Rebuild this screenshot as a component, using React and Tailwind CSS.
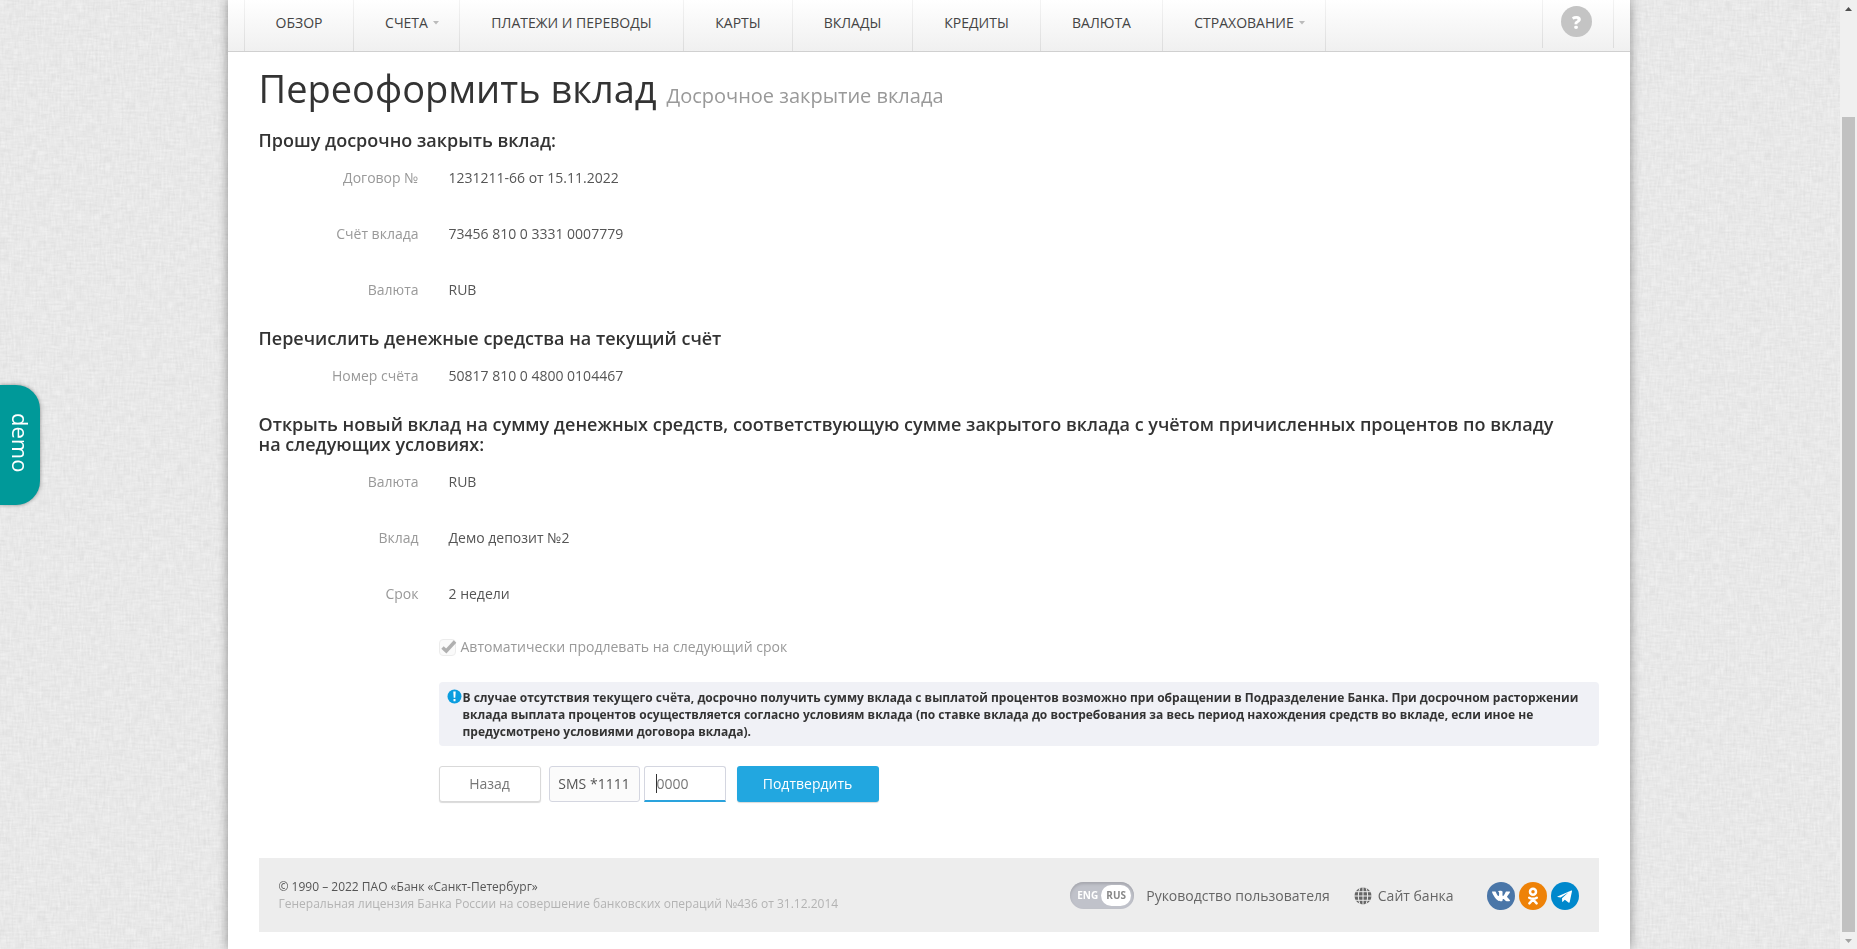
import React from "react";

const nav = [
  { label: "ОБЗОР", w: "w-[109px]" },
  { label: "СЧЕТА", w: "w-[106px]", menu: true },
  { label: "ПЛАТЕЖИ И ПЕРЕВОДЫ", w: "w-[224px]" },
  { label: "КАРТЫ", w: "w-[109px]" },
  { label: "ВКЛАДЫ", w: "w-[120px]" },
  { label: "КРЕДИТЫ", w: "w-[128px]" },
  { label: "ВАЛЮТА", w: "w-[122px]" },
  { label: "СТРАХОВАНИЕ", w: "w-[163px]", menu: true },
];

function Texture() {
  return (
    <svg className="fixed inset-0 -z-10 h-full w-full" aria-hidden="true">
      <defs>
        <filter id="weave" x="0" y="0" width="100%" height="100%" colorInterpolationFilters="sRGB">
          <feTurbulence type="fractalNoise" baseFrequency="0.08 0.5" numOctaves="2" seed="3" result="h" />
          <feTurbulence type="fractalNoise" baseFrequency="0.5 0.08" numOctaves="2" seed="8" result="v" />
          <feComposite in="h" in2="v" operator="arithmetic" k1="0" k2="0.5" k3="0.5" k4="0" />
          <feColorMatrix values="0.12 0 0 0 0.85  0.12 0 0 0 0.85  0.12 0 0 0 0.85  0 0 0 0 1" />
        </filter>
      </defs>
      <rect width="100%" height="100%" filter="url(#weave)" />
    </svg>
  );
}

function Divider() {
  return <span className="w-px shrink-0 bg-linear-to-b from-[#f4f4f4] to-[#dcdcdc]" />;
}

function TopNav() {
  return (
    <nav className="flex h-[52px] border-b border-[#d0d0d0] bg-linear-to-b from-white to-[#f0f0f0] pl-4 text-sm text-[#444]">
      <Divider />
      {nav.map((n) => (
        <div key={n.label} className={"flex " + n.w}>
          <a href="#" className="flex flex-1 items-center justify-center pb-[6px] pl-px whitespace-nowrap">
            {n.label}
            {n.menu && (
              <svg width="6" height="4" viewBox="0 0 6 4" fill="#bbb" className="-mr-[11px] ml-[5px]">
                <path d="M0 0h6L3 3.5z" />
              </svg>
            )}
          </a>
          <Divider />
        </div>
      ))}
      <div className="mr-4 ml-auto flex h-12">
        <Divider />
        <div className="flex w-[70px] justify-center pt-[6px] pr-[2px]">
          <button aria-label="Помощь" className="h-[31px] w-[31px] rounded-full bg-[#c4c4c4] text-lg leading-none font-extrabold text-white">
            ?
          </button>
        </div>
        <Divider />
      </div>
    </nav>
  );
}

function Heading({ children }) {
  return <h2 className="pr-6 text-lg leading-5 font-semibold text-[#333]">{children}</h2>;
}

function Row({ label, value }) {
  return (
    <div className="flex h-5 gap-[30px] text-sm leading-5">
      <dt className="w-40 text-right text-[#999]">{label}</dt>
      <dd className="text-[#555]">{value}</dd>
    </div>
  );
}

function Footer() {
  return (
    <footer className="mt-14 flex h-[74px] items-center justify-between bg-[#ededed] px-5">
      <div className="text-xs leading-[17px]">
        <p className="text-[#555]">© 1990 – 2022 ПАО «Банк «Санкт-Петербург»</p>
        <p className="text-[#b3b3b3]">Генеральная лицензия Банка России на совершение банковских операций №436 от 31.12.2014</p>
      </div>
      <div className="flex items-center pt-px text-sm text-[#666]">
        <div className="mr-3 flex h-[27px] w-16 items-center justify-between rounded-full bg-[#c0c2ca] pr-[3px] pl-[7px] text-[10px] font-bold shadow-[inset_0_2px_3px_#a5a6ad]">
          <button className="text-white">ENG</button>
          <button className="h-[21px] w-[30px] rounded-full bg-white text-[#888]">RUS</button>
        </div>
        <a href="#" className="mr-6">Руководство пользователя</a>
        <a href="#" className="mr-[33px] flex items-center gap-[6px]">
          <svg width="18" height="18" viewBox="0 0 18 18">
            <circle cx="9" cy="9" r="8.5" fill="#666" />
            <path d="M9 0v18M0 9h18M1.5 4.7h15M1.5 13.3h15M6 .7Q2.600 9 6 17.300M12 .7Q15.400 9 12 17.300" stroke="#ededed" strokeWidth="1" fill="none" />
          </svg>
          Сайт банка
        </a>
        <div className="flex gap-1">
          <a href="#" aria-label="ВКонтакте">
            <svg width="28" height="28" viewBox="0 0 28 28">
              <circle cx="14" cy="14" r="14" fill="#4a76a8" />
              <path transform="translate(5 5) scale(.75)" fill="#fff" d="M13.162 18.994c.609 0 .858-.406.851-.915-.031-1.917.714-2.949 2.059-1.604 1.488 1.488 1.796 2.519 3.603 2.519h3.200c.808 0 1.126-.26 1.126-.668 0-.863-1.421-2.386-2.625-3.504-1.686-1.565-1.765-1.602-.313-3.486 1.801-2.339 4.157-5.336 2.073-5.336h-3.981c-.772 0-.828.435-1.103 1.083-.995 2.347-2.886 5.387-3.604 4.922-.751-.485-.407-2.406-.35-5.261.015-.754.011-1.271-1.141-1.539-.629-.145-1.241-.205-1.809-.205-2.273 0-3.841.953-2.950 1.119 1.571.293 1.420 3.692 1.054 5.160-.638 2.556-3.036-2.024-4.035-4.305-.241-.548-.315-.974-1.175-.974h-3.255c-.492 0-.787.160-.787.516 0 .602 2.960 6.720 5.786 9.770 2.756 2.975 5.480 2.708 7.376 2.708z" />
            </svg>
          </a>
          <a href="#" aria-label="Одноклассники">
            <svg width="28" height="28" viewBox="0 0 28 28">
              <circle cx="14" cy="14" r="14" fill="#ee8208" />
              <g fill="none" stroke="#fff" strokeWidth="2.500" strokeLinecap="round">
                <circle cx="14" cy="9.800" r="3" />
                <path d="M10.200 15.700q3.800 2.300 7.600 0M14 17.500l-3.600 3.800M14 17.500l3.600 3.800" />
              </g>
            </svg>
          </a>
          <a href="#" aria-label="Telegram">
            <svg width="28" height="28" viewBox="0 0 28 28">
              <circle cx="14" cy="14" r="14" fill="#0088cc" />
              <path fill="#fff" d="M6.500 14.500 20.300 8.600q.9-.3.700.7l-2.300 10.800q-.3 1-1.200.4l-3.700-2.700-2 2q-.5.400-.6-.3l-.2-3.200 6.300-5.700-7.700 4.900-3-.6q-.6-.1-.1-.4z" />
            </svg>
          </a>
        </div>
      </div>
    </footer>
  );
}

function Scrollbar() {
  return (
    <div aria-hidden="true" className="fixed inset-y-0 right-0 flex w-[17px] flex-col items-center bg-[#f0f0f0]">
      <div className="flex h-[117px] pt-[7px]">
        <svg width="7" height="4" viewBox="0 0 7 4" fill="#505050"><path d="M0 4h7L3.500 0z" /></svg>
      </div>
      <div className="w-[13px] flex-1 bg-[#c1c1c1]" />
      <div className="flex h-[17px] items-center">
        <svg width="7" height="4" viewBox="0 0 7 4" fill="#a3a3a3"><path d="M0 0h7L3.500 4z" /></svg>
      </div>
    </div>
  );
}

export default function App() {
  return (
    <div className="isolate min-h-screen bg-[#e6e6e6] font-['Open_Sans',sans-serif]">
      <Texture />
      <div className="mx-auto flex min-h-screen max-w-[1402px] flex-col bg-white shadow-[0_0_10px_rgba(0,0,0,0.4)]">
        <TopNav />
        <main className="px-[31px] pb-4">
          <h1 className="pt-[14px] text-[38px] leading-[44px] font-normal text-[#333]">
            Переоформить вклад <small className="text-xl text-[#999]">Досрочное закрытие вклада</small>
          </h1>
          <div className="mt-5"><Heading>Прошу досрочно закрыть вклад:</Heading></div>
          <dl className="mt-[18px] flex flex-col gap-9">
            <Row label="Договор №" value="1231211-66 от 15.11.2022" />
            <Row label="Счёт вклада" value="73456 810 0 3331 0007779" />
            <Row label="Валюта" value="RUB" />
          </dl>
          <div className="mt-7"><Heading>Перечислить денежные средства на текущий счёт</Heading></div>
          <dl className="mt-[18px]">
            <Row label="Номер счёта" value="50817 810 0 4800 0104467" />
          </dl>
          <div className="mt-7">
            <Heading>
              Открыть новый вклад на сумму денежных средств, соответствующую сумме закрытого вклада с учётом причисленных процентов по вкладу на следующих условиях:
            </Heading>
          </div>
          <dl className="mt-[18px] flex flex-col gap-9">
            <Row label="Валюта" value="RUB" />
            <Row label="Вклад" value="Демо депозит №2" />
            <Row label="Срок" value="2 недели" />
          </dl>
          <div className="ml-[180px]">
            <label className="mt-[33px] flex h-5 items-center gap-1 text-sm text-[#999]">
              <span className="grid h-[17px] w-[17px] place-items-center rounded-sm border border-[#ececec] bg-[#fafafa]">
                <input type="checkbox" defaultChecked className="col-start-1 row-start-1 h-[15px] w-[15px] appearance-none" />
                <svg width="15" height="15" viewBox="0 0 15 15" className="pointer-events-none col-start-1 row-start-1 overflow-visible">
                  <path d="M2.500 7.500 6.300 11 15 1.500" fill="none" stroke="#b0b0b0" strokeWidth="3.500" />
                </svg>
              </span>
              <span className="pl-px">Автоматически продлевать на следующий срок</span>
            </label>
            <div className="mt-[25px] flex gap-px rounded-sm bg-[#f0f1f6] pt-[7px] pr-4 pb-[6px] pl-2 text-xs leading-[17px] font-bold text-[#333]">
              <svg width="15" height="15" viewBox="0 0 15 15" className="shrink-0">
                <circle cx="7.500" cy="7.500" r="7" fill="#0a9ddf" />
                <path d="M6.300 2.500h2.400L8.300 8.700H6.700zM6.500 10h2v2.200h-2z" fill="#fff" />
              </svg>
              <p>
                В случае отсутствия текущего счёта, досрочно получить сумму вклада с выплатой процентов возможно при обращении в Подразделение Банка. При досрочном расторжении вклада выплата процентов осуществляется согласно условиям вклада (по ставке вклада до востребования за весь период нахождения средств во вкладе, если иное не предусмотрено условиями договора вклада).
              </p>
            </div>
            <form className="mt-5 flex h-9 text-sm text-[#555]" onSubmit={(e) => e.preventDefault()}>
              <button type="button" className="mr-2 w-[102px] rounded-[3px] border border-[#d9d9d9] bg-white text-[#777] shadow-[0_1px_1px_rgba(0,0,0,0.15)]">Назад</button>
              <label htmlFor="code" className="mr-1 flex w-[91px] items-center justify-center rounded-[3px] border border-[#d4d6e0] bg-[#fbfbfb]">SMS *1111</label>
              <div className="mr-[11px] flex w-[82px] items-center rounded-t-[3px] border border-b-2 border-[#d4d6e0] border-b-[#2aa3dd] bg-white pl-[11px]">
                <span className="h-[19px] w-px bg-[#333]" />
                <input id="code" defaultValue="0000" className="w-full min-w-0 bg-transparent text-[#777] outline-none" />
              </div>
              <button type="submit" className="w-[142px] rounded-[3px] bg-[#22a7e0] font-medium text-white shadow-[0_1px_1px_rgba(0,0,0,0.15)]">Подтвердить</button>
            </form>
          </div>
          <Footer />
        </main>
      </div>
      <button className="fixed top-[385px] left-0 h-30 w-10 rounded-r-3xl bg-[#009999] pb-1 text-[22px] text-white shadow-[0_0_4px_rgba(0,0,0,0.4)] [writing-mode:vertical-rl]">demo</button>
      <Scrollbar />
    </div>
  );
}
